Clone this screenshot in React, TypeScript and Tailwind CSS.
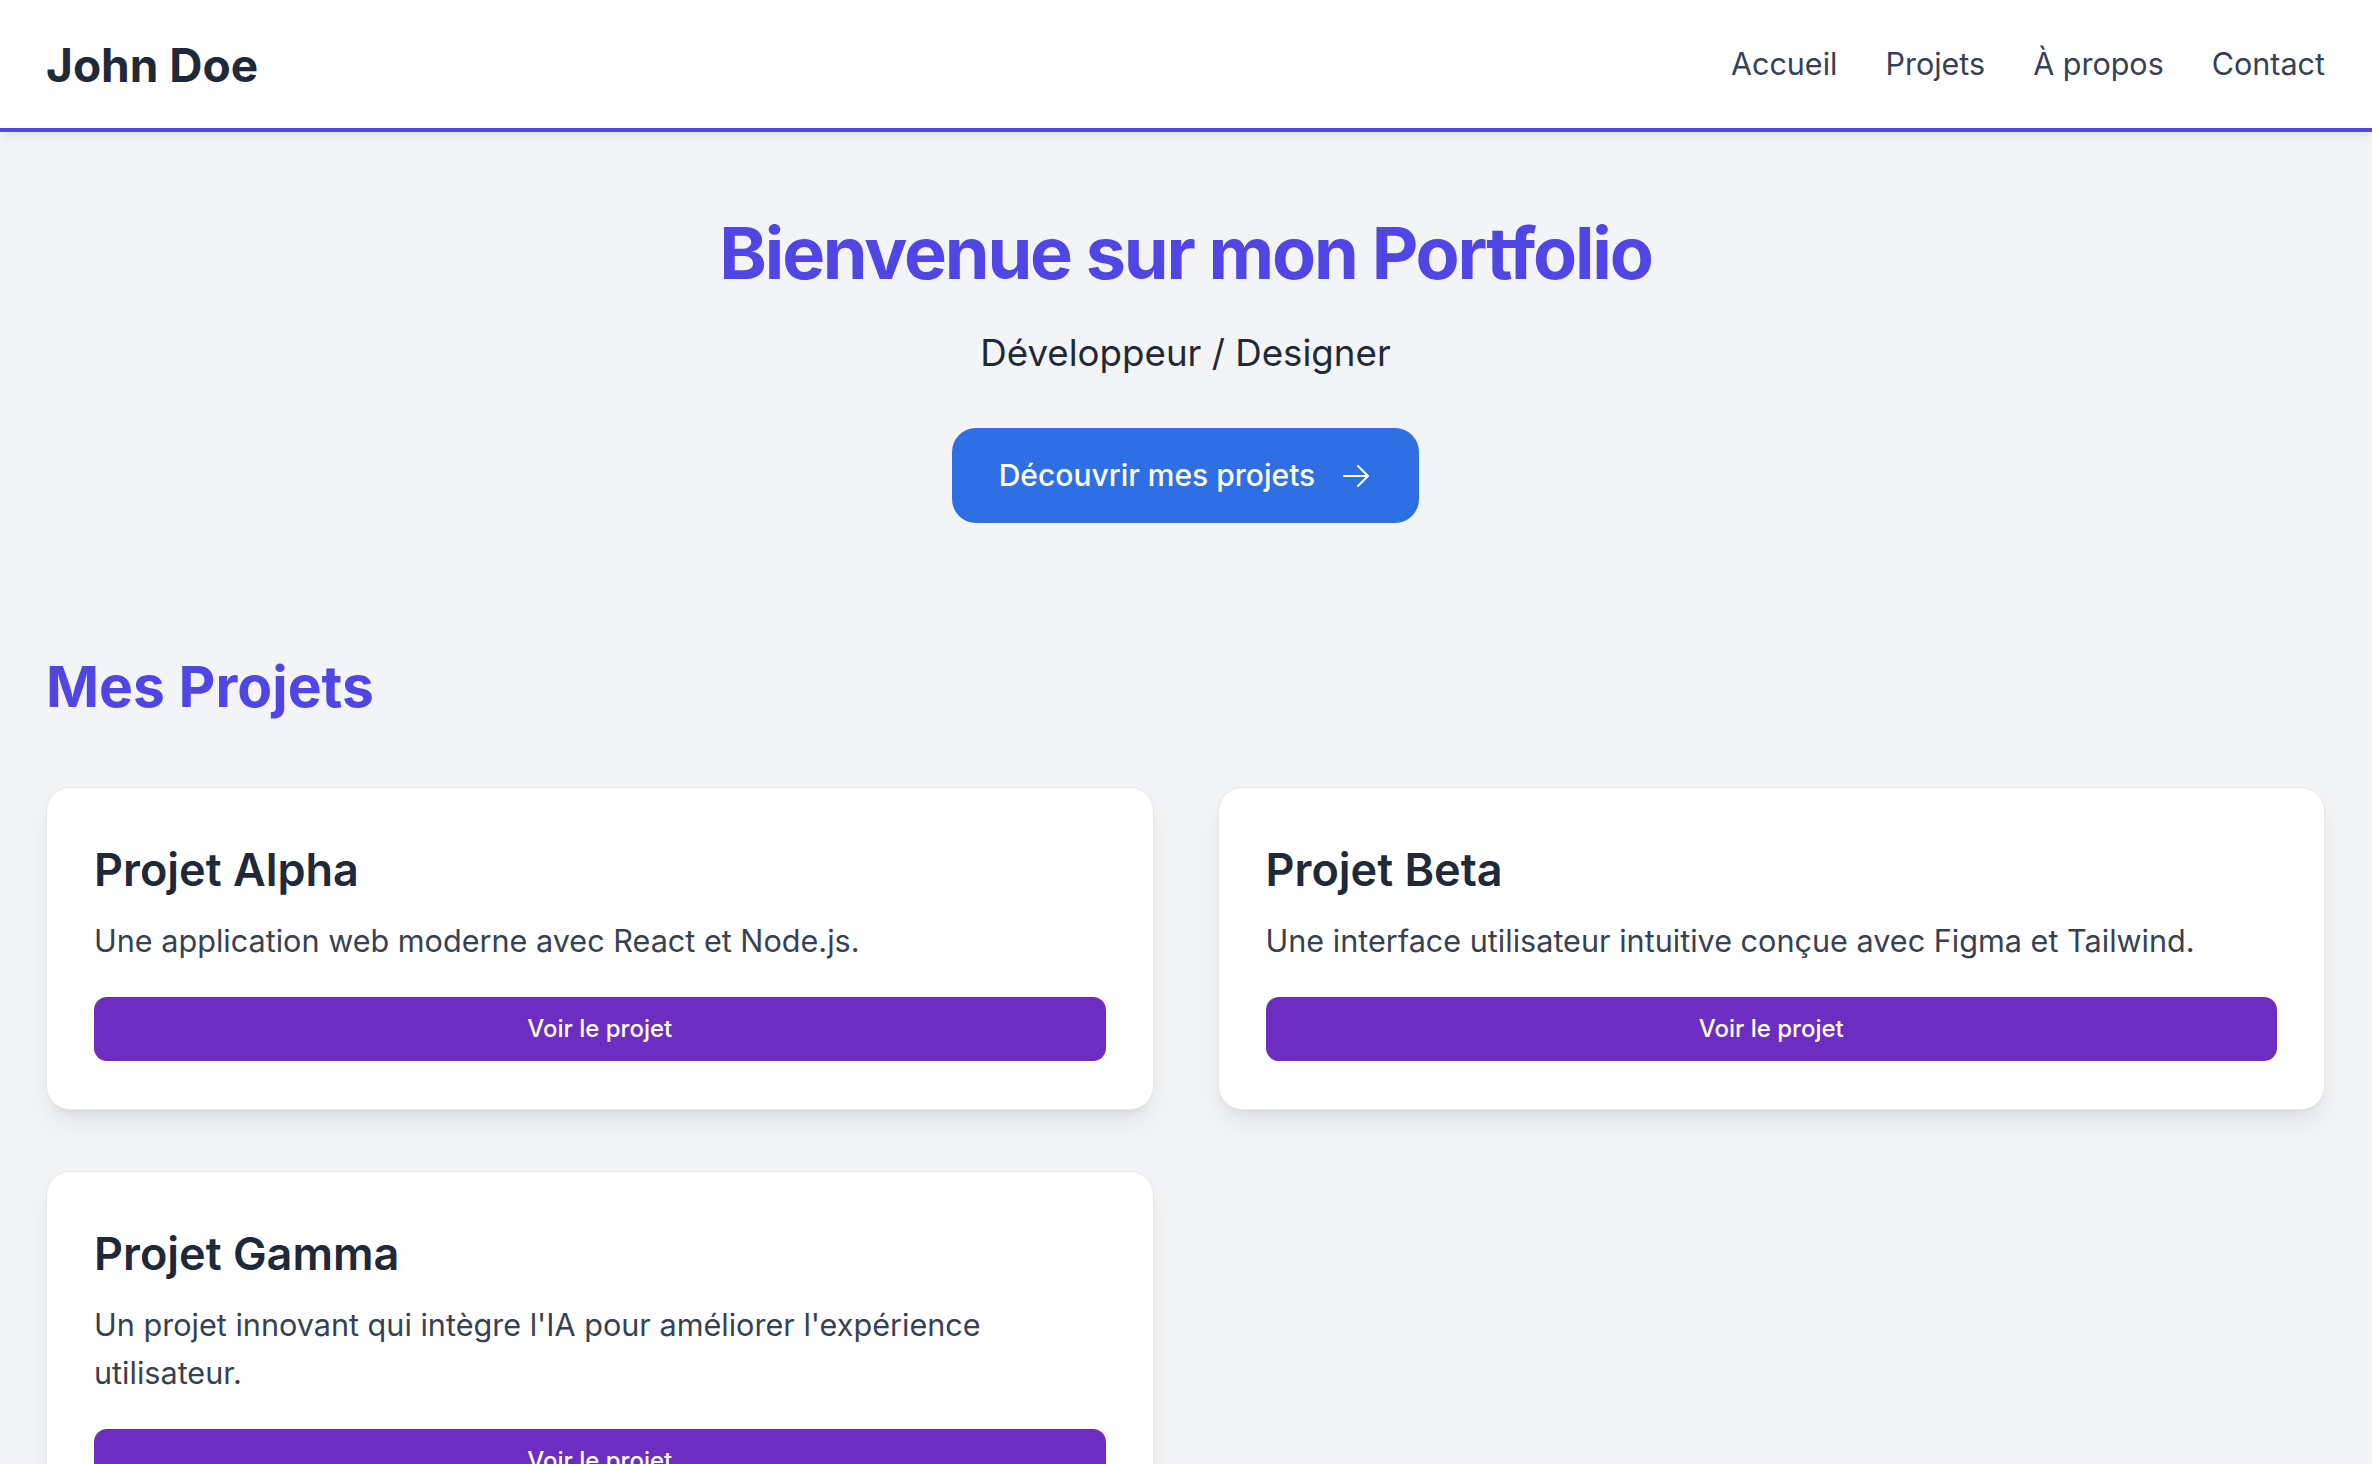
import { HiOutlineArrowRight } from "react-icons/hi2";

type Project = {
  title: string;
  description: string;
};

const NAV_LINKS = ["Accueil", "Projets", "À propos", "Contact"];

const PROJECTS: Project[] = [
  {
    title: "Projet Alpha",
    description: "Une application web moderne avec React et Node.js.",
  },
  {
    title: "Projet Beta",
    description:
      "Une interface utilisateur intuitive conçue avec Figma et Tailwind.",
  },
  {
    title: "Projet Gamma",
    description:
      "Un projet innovant qui intègre l'IA pour améliorer l'expérience utilisateur.",
  },
];

function Header() {
  return (
    <header className="relative z-10 flex h-[132px] items-center justify-between border-b-4 border-[#4f46e5] bg-white pl-[46px] pr-[47px] shadow-[0_6px_10px_-2px_rgba(0,0,0,0.08)]">
      <h1 className="pt-[2px] text-[46px] font-bold leading-[54px] text-[#1f2937]">
        John Doe
      </h1>
      <nav className="flex items-center gap-[48px]">
        {NAV_LINKS.map((link) => (
          <a
            key={link}
            href="#"
            className="text-[30.5px] leading-[42px] text-[#374151]"
          >
            {link}
          </a>
        ))}
      </nav>
    </header>
  );
}

function Hero() {
  return (
    <section className="flex flex-col items-center pt-[85px] text-center">
      <h2 className="text-[72px] font-bold leading-[72px] tracking-[-0.03em] text-[#4f46e5]">
        Bienvenue sur mon Portfolio
      </h2>
      <p className="mt-[40px] text-[36.7px] leading-[48px] text-[#1f2937]">
        Développeur / Designer
      </p>
      <button className="mt-[51px] flex h-[95px] items-center gap-[25px] rounded-[24px] bg-[#2f6fe4] px-[47px] text-[30px] font-medium text-white">
        Découvrir mes projets
        <HiOutlineArrowRight size={32} />
      </button>
    </section>
  );
}

function ProjectCard({ title, description }: Project) {
  return (
    <article className="flex flex-col rounded-[24px] border border-[#e5e7eb] bg-white px-[47px] pb-[48px] pt-[55px] shadow-[0_15px_24px_-4px_rgba(0,0,0,0.08),0_6px_10px_-6px_rgba(0,0,0,0.08)]">
      <h4 className="text-[45px] font-semibold leading-[54px] text-[#1f2937]">
        {title}
      </h4>
      <p className="mt-[20px] text-[30.6px] leading-[48.5px] text-[#374151]">
        {description}
      </p>
      <button className="mt-[31px] h-[64px] w-full rounded-[13px] bg-[#6d2dc0] text-[24px] font-medium text-white">
        Voir le projet
      </button>
    </article>
  );
}

export default function App() {
  return (
    <div className="min-h-screen bg-[#f3f4f6] pb-[96px] font-['Inter',sans-serif]">
      <Header />
      <main className="pl-[46px] pr-[47px]">
        <Hero />
        <section className="mt-[134px]">
          <h3 className="text-[57px] font-bold leading-[60px] text-[#4f46e5]">
            Mes Projets
          </h3>
          <div className="mt-[70px] grid grid-cols-2 gap-x-[64px] gap-y-[61px]">
            {PROJECTS.map((project) => (
              <ProjectCard key={project.title} {...project} />
            ))}
          </div>
        </section>
      </main>
    </div>
  );
}
